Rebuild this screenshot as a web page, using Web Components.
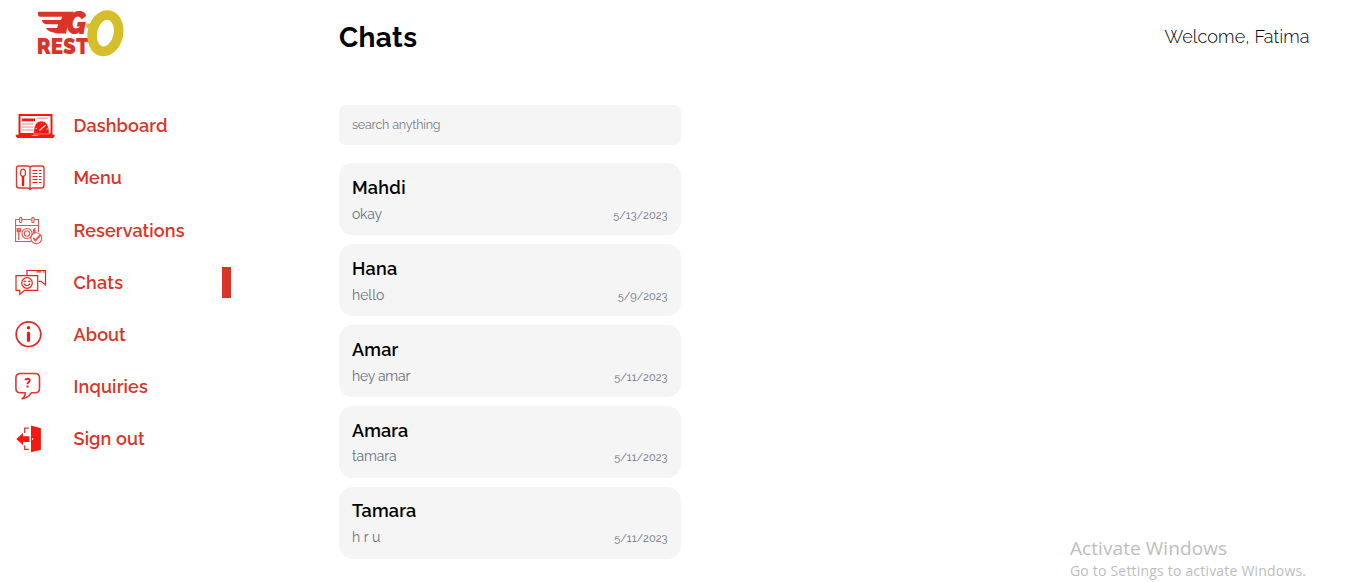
<!DOCTYPE html>
<html lang="en">
<head>
<meta charset="utf-8">
<title>Go Resto - Chats</title>
<style>
html,body{margin:0;height:100%;overflow:hidden;background:#fff}
body{font-family:Raleway,Lato,"Open Sans",sans-serif;color:#000}
</style>
</head>
<body>
<resto-app></resto-app>
<script>
const define = (name, html, setup) => customElements.define(name, class extends HTMLElement {
  constructor() {
    super();
    const t = document.createElement('template');
    t.innerHTML = html;
    this.attachShadow({mode: 'open'}).append(t.content.cloneNode(true));
  }
  connectedCallback() { if (setup) setup(this, this.shadowRoot); }
});

/* A single line of text tracked to a given measure. */
define('tracked-text', `<style>:host{display:inline-block;white-space:nowrap}span{display:inline-block}</style><span><slot></slot></span>`, (el, root) => {
  const span = root.querySelector('span');
  const want = parseFloat(el.getAttribute('measure'));
  span.style.letterSpacing = '0px';
  const gap = (want - span.getBoundingClientRect().width) / (el.textContent.length - 1);
  span.style.letterSpacing = gap + 'px';
  span.style.marginRight = -gap + 'px';
});

define('resto-logo', `<style>:host{display:block;width:90px;height:60px}svg{display:block}text{font-family:Raleway,Lato,sans-serif;font-weight:900;fill:#d93427}</style>
<svg width="90" height="60" viewBox="36 0 90 60">
<path fill="#d93427" d="M38 11.7H74L69 19L66 33.5H57L50 31.5Q47.5 31 46 28H57L58.3 24.2H46Q43 24 41.8 20H61L62.2 16.8H40Q38 16.8 38 14Z"/>
<text x="66.3" y="34.3" font-size="31" font-style="italic" textLength="20" lengthAdjust="spacingAndGlyphs">G</text>
<text x="36.8" y="53.8" font-size="21.5" textLength="52" lengthAdjust="spacingAndGlyphs">REST</text>
<path d="M86 23.5H92V28H86.5Z" fill="#d6be2a"/>
<ellipse cx="105.4" cy="33.2" rx="13" ry="18.4" fill="none" stroke="#d6be2a" stroke-width="9.6" transform="rotate(12 105.4 33.2)"/>
</svg>`);

const icons = {
dashboard: `<rect x="4.5" y="5" width="32" height="19" fill="none" stroke="#f51811" stroke-width="2"/><path d="M7 8.5H20V11.3H7Z" fill="#f51811"/><path d="M7 14H18M7 17H18M7 20H18M22 8.2H33" stroke="#f9867f" stroke-width="1" fill="none"/><path d="M18.6 24Q18.6 11 26.3 11T34.4 24Z" fill="#f51811" stroke="#fff" stroke-width=".5"/><path d="M24.5 20.5L30.5 15.2" stroke="#fff" stroke-width="1.1"/><path d="M20.5 18.5H22M26.5 13V14.3M31.2 19H33" stroke="#fff" stroke-width=".6"/><path d="M.8 24.7H16L17 25.5H23L24 24.7H39.5V26.5L38 28H2.5L.8 26.5Z" fill="#f51811"/>`,
menu: `<path d="M15 5Q14 4 12 4H3.5Q1.5 4 1.5 6V23.5Q1.5 26 4 26H12.5Q14 26 15 27.5Q16 26 17.5 26H26.5Q29 26 29 23.5V6Q29 4 26.5 4H18Q16 4 15 5V26.8" fill="none" stroke="#e5342c" stroke-width="1.4"/><ellipse cx="8" cy="10.7" rx="2.5" ry="3.6" fill="none" stroke="#e5342c" stroke-width="1.3"/><path d="M8 15V23" stroke="#f51811" stroke-width="2.4" stroke-linecap="round"/><path d="M17.5 8.5H22.5M17.5 11.5H22.5M17.5 14.5H22.5M17.5 17.5H22.5M17.5 20.5H22.5M24 8.5H26.5M24 11.5H26.5M24 14.5H26.5M24 17.5H26.5M24 20.5H26.5" stroke="#f51811" stroke-width="1.2"/>`,
reservations: `<g fill="none" stroke="#e2564f" stroke-width="1.1"><path d="M4.8 5.5H.6V27.5H16M7 5.5H16.5M19 5.5H23.5V18M.8 11.5H23.3"/><rect x="4.6" y="3.4" width="2.2" height="5" rx="1"/><rect x="16.8" y="3.4" width="2.2" height="5" rx="1"/><circle cx="12" cy="19.5" r="5"/><circle cx="12" cy="19.5" r="2.7"/><path d="M3.8 17.5V26M2.3 14V17.5H5.4V14M3.8 14V17.5" stroke-width="1.3"/><path d="M20 20V14.5Q18.4 15 18.4 18V20" fill="#e2564f"/><circle cx="21.3" cy="24.2" r="5.4" fill="#fff"/><path d="M18.2 24L20.4 26.3L25.5 21" stroke-width="1.9"/></g>`,
chats: `<g fill="none" stroke="#e5241d" stroke-width="1.2"><path d="M12 9V4.5H30.5V19L26 15.3H23.5M21.5 5.8H26.5M28 5.8H29.5"/><path d="M1 9.7H22.7V24.3H9.5L4.8 28.5V24.3H1Z" fill="#fff"/><circle cx="12" cy="17" r="5.3"/><path d="M8.8 17.7Q12 21.8 15.2 17.7M8.8 15.8Q9.8 14.5 10.8 15.8M13.2 15.8Q14.2 14.5 15.2 15.8"/></g>`,
about: `<circle cx="13.5" cy="16.2" r="12.3" fill="none" stroke="#e0281f" stroke-width="1.7"/><circle cx="13.5" cy="9.8" r="1.7" fill="#f51811"/><path d="M13.5 15V22.3" stroke="#f51811" stroke-width="3.2" stroke-linecap="round"/>`,
inquiries: `<path d="M5.3 3.5H20Q24.5 3.5 24.5 8V18.5Q24.5 22.8 20 22.8H16.2Q13 28 7.1 28.7Q10.4 26.7 10.2 22.8H5.2Q.9 22.8.9 18.5V8Q.9 3.5 5.3 3.5Z" fill="none" stroke="#e5342c" stroke-width="1.6" stroke-linejoin="round"/><path d="M10.3 10.2Q10.6 8.7 12.6 8.7Q14.7 8.7 14.7 10.5Q14.7 11.5 13.4 12.2Q12.5 12.8 12.5 14.3" fill="none" stroke="#e5241d" stroke-width="1.9"/><rect x="11.5" y="15.5" width="2" height="2" fill="#e5241d"/>`,
signout: `<path d="M1.3 16L8 10V13.2H14.5V19H8V22Z" fill="#f51811"/><path d="M16 2.6L25.9 5.3V26.7L16 29.3Z" fill="#f51811"/><path d="M13.8 5.2H9.7V10M9.7 22.5V26.3H13.8" stroke="#e5342c" stroke-width="1.3" fill="none"/><circle cx="17.6" cy="16.1" r=".8" fill="#fff"/>`
};
define('nav-icon', `<style>:host{display:block;width:40px;height:32px;flex:none}svg{display:block}</style><svg width="40" height="32" viewBox="0 0 40 32"></svg>`);

define('nav-item', `<style>
:host{display:flex;align-items:center;height:52.12px;padding-left:15px;box-sizing:border-box;color:#d93427;font-size:18px;font-weight:600}
.label{flex:1;margin-left:18.5px}.bar{width:9px;height:31px;background:#d93427;visibility:hidden}
:host([active]) .bar{visibility:visible}
</style><nav-icon></nav-icon><div class="label"><slot></slot></div><div class="bar"></div>`, (el, root) => {
  root.querySelector('nav-icon').shadowRoot.querySelector('svg').innerHTML = icons[el.getAttribute('icon')];
});

define('side-nav', `<style>:host{display:block;width:231px;flex:none}resto-logo{margin-left:36px}nav{margin-top:39.8px}</style>
<resto-logo></resto-logo>
<nav>
<nav-item icon="dashboard"><tracked-text measure="94">Dashboard</tracked-text></nav-item>
<nav-item icon="menu"><tracked-text measure="48.2">Menu</tracked-text></nav-item>
<nav-item icon="reservations"><tracked-text measure="111">Reservations</tracked-text></nav-item>
<nav-item icon="chats" active><tracked-text measure="49.5">Chats</tracked-text></nav-item>
<nav-item icon="about"><tracked-text measure="52.2">About</tracked-text></nav-item>
<nav-item icon="inquiries"><tracked-text measure="74.3">Inquiries</tracked-text></nav-item>
<nav-item icon="signout"><tracked-text measure="71.2">Sign out</tracked-text></nav-item>
</nav>`);

define('search-field', `<style>:host{display:flex;align-items:center;box-sizing:border-box;height:40px;padding:0 13px 2px;border-radius:7px;background:#f5f5f5;color:#7c7c85;font-size:12.5px}</style><slot></slot>`);

define('chat-card', `<style>
:host{display:flex;flex-direction:column;box-sizing:border-box;height:71.8px;padding:12.5px 13.5px 0 13px;border-radius:14px;background:#f5f5f5}
.name{font-size:18px;font-weight:600;line-height:24px;height:23.95px}
.row{display:flex;justify-content:space-between;line-height:28px;height:28px;color:#6b7280;font-size:14px}
.date{font-size:11px;line-height:31px;font-variant-numeric:oldstyle-nums}
</style><div class="name"><slot name="name"></slot></div><div class="row"><slot></slot><span class="date"><slot name="date"></slot></span></div>`);

define('page-header', `<style>:host{display:flex;justify-content:space-between;align-items:center;height:74px;padding-right:48.5px}
.title{font-size:28px;font-weight:700;margin:0}.hello{font-size:18px;font-weight:300;color:#000;padding-bottom:2px}</style>
<h1 class="title"><slot></slot></h1><div class="hello"><slot name="welcome"></slot></div>`);

define('activation-note', `<style>:host{position:absolute;left:1070px;top:536px;color:#bdbdbd;font-family:"Segoe UI","Open Sans",sans-serif;white-space:nowrap}
.a{font-size:19px;line-height:25px;height:25px}.b{font-size:14px;line-height:20px}</style>
<div class="a"><tracked-text measure="157">Activate Windows</tracked-text></div><div class="b"><tracked-text measure="236">Go to Settings to activate Windows.</tracked-text></div>`);

const chats = [['Mahdi',53.5,'okay',30,'5/13/2023',54.3],['Hana',45.2,'hello',32.3,'5/9/2023',49.8],['Amar',46.3,'hey amar',58.3,'5/11/2023',53.3],['Amara',56.2,'tamara',44.6,'5/11/2023',53.3],['Tamara',64.2,'h r u',28.3,'5/11/2023',53.3]];
define('resto-app', `<style>
:host{display:flex;position:relative;height:582px;overflow:hidden}
main{flex:1;margin-left:108px}
.list{width:342px;margin-top:31px;display:flex;flex-direction:column;gap:9.15px}
search-field{margin-bottom:9.05px}
</style>
<side-nav></side-nav>
<main>
<page-header><tracked-text measure="78">Chats</tracked-text><tracked-text slot="welcome" measure="145">Welcome, Fatima</tracked-text></page-header>
<div class="list"><search-field><tracked-text measure="88.5">search anything</tracked-text></search-field>
${chats.map(c => `<chat-card><tracked-text slot="name" measure="${c[1]}">${c[0]}</tracked-text><tracked-text measure="${c[3]}">${c[2]}</tracked-text><tracked-text slot="date" measure="${c[5]}">${c[4]}</tracked-text></chat-card>`).join('')}
</div>
</main>
<activation-note></activation-note>`);
</script>
</body>
</html>
